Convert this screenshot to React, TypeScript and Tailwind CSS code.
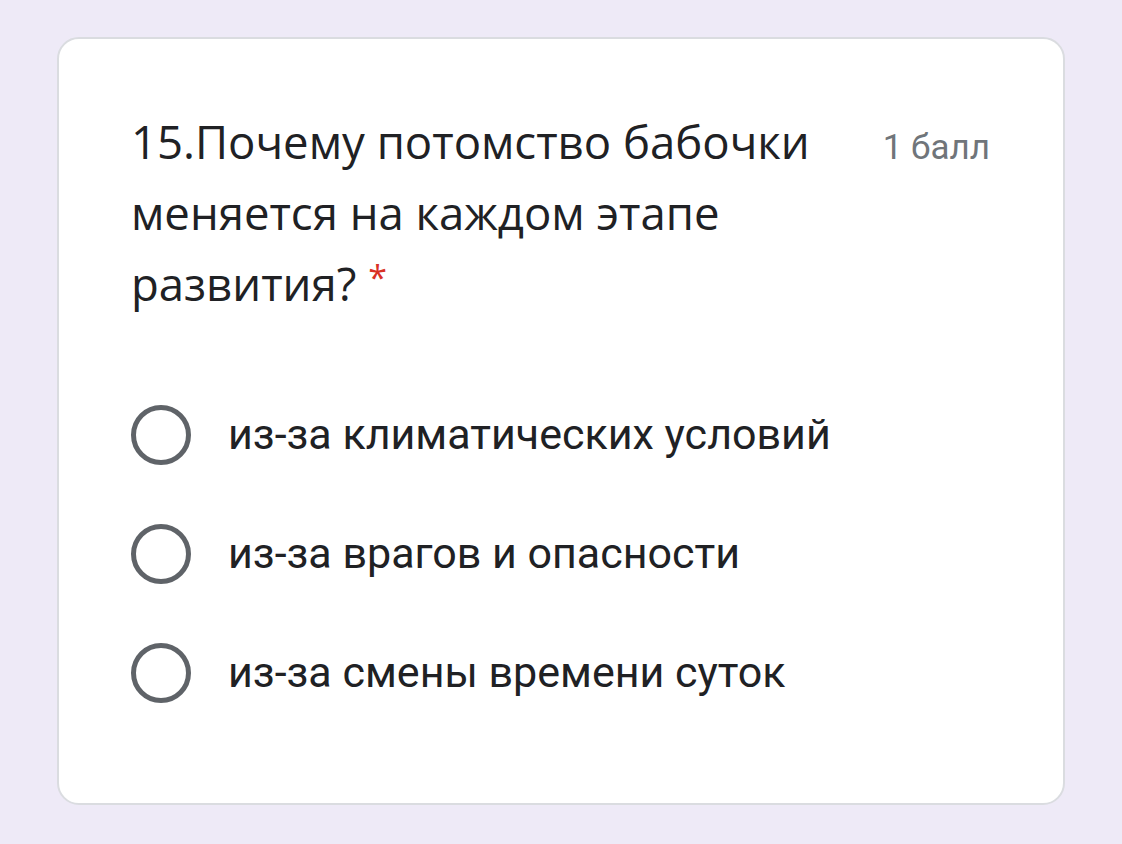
import React from "react";

const options = [
  "из-за климатических условий",
  "из-за врагов и опасности",
  "из-за смены времени суток",
];

export default function App() {
  return (
    <div className="w-[1122px] h-[844px] bg-[#eeeaf7] pt-[37px] pl-[57px]">
      <div className="w-[1008px] h-[768px] bg-white border-2 border-[#dadce0] rounded-[22px] pl-[72px] pr-[73px] pt-[67px]">
        <div className="flex justify-between items-baseline">
          <div
            className="text-[45.5px] leading-[71px] text-[#202124]"
            style={{ fontFamily: '"Open Sans", sans-serif' }}
          >
            15.Почему потомство бабочки
            <br />
            меняется на каждом этапе
            <br />
            развития?{" "}
            <span className="text-[34px] align-top relative top-[-6px] text-[#d93025]">*</span>
          </div>
          <div
            className="text-[35px] text-[#70757a] whitespace-nowrap"
            style={{ fontFamily: 'Roboto, sans-serif' }}
          >
            1 балл
          </div>
        </div>
        <div className="mt-[85px] flex flex-col gap-[58px]">
          {options.map((o) => (
            <div key={o} className="flex items-center h-[61px]">
              <div className="w-[60px] h-[60px] rounded-full border-[5px] border-[#5f6368] shrink-0" />
              <span
                className="ml-[37px] text-[43px] text-[#202124]"
                style={{ fontFamily: 'Roboto, sans-serif' }}
              >
                {o}
              </span>
            </div>
          ))}
        </div>
      </div>
    </div>
  );
}
